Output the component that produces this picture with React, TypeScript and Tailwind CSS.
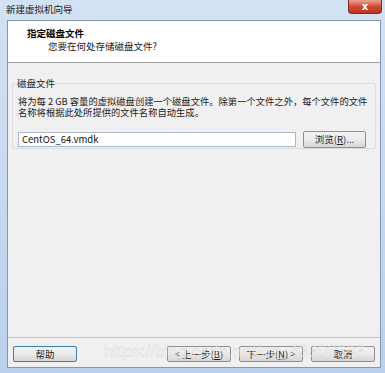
import React from 'react';

const btn =
  'h-[16px] flex items-center justify-center text-[9.5px] text-[#1e1e1e] rounded-[2px] border bg-gradient-to-b from-[#f2f2f2] via-[#ebebeb] to-[#d6d6d6] whitespace-nowrap';

const App: React.FC = () => {
  return (
    <div
      className="relative w-[385px] h-[373px] flex flex-col bg-gradient-to-b from-[#d3e2f3] to-[#b9d1ec] pl-[7px] pr-[4px] pb-[5px] overflow-hidden"
      style={{ fontFamily: '"Noto Sans CJK SC", "Liberation Sans", sans-serif' }}
    >
      {/* title bar */}
      <div className="h-[20px] flex items-center -ml-[1px] text-[9.5px] text-[#1b1b1b] leading-none">
        新建虚拟机向导
      </div>
      <div className="absolute top-0 right-[3px] w-[34px] h-[14px] rounded-b-[4px] border border-t-0 border-[#7a2b22] bg-gradient-to-b from-[#e9a493] via-[#cf4b32] to-[#c1361f] flex items-center justify-center">
        <span className="text-white text-[10px] font-bold leading-none" style={{ fontFamily: '"DejaVu Sans", sans-serif' }}>
          x
        </span>
      </div>

      {/* window body */}
      <div className="flex-1 flex flex-col border border-[#8497af] bg-[#f0f0f0]">
        <div className="h-[42px] bg-white border-b border-[#a0a0a0] pt-[6px]">
          <div className="pl-[19px] text-[9.5px] font-bold text-black leading-[13px]">指定磁盘文件</div>
          <div className="pl-[40px] text-[9.5px] text-[#222] leading-[13px]">您要在何处存储磁盘文件?</div>
        </div>

        <div className="flex-1 px-[4px] pt-[20px]">
          <div className="relative border border-[#dcdcdc] rounded-[3px] h-[66px] pt-[12px] px-[5px]">
            <div className="absolute -top-[7px] left-[3px] px-[1px] bg-[#f0f0f0] text-[9.5px] text-[#222] leading-[12px]">
              磁盘文件
            </div>
            <div className="text-[9.3px] text-[#222] leading-[11px] whitespace-nowrap">
              将为每 2 GB 容量的虚拟磁盘创建一个磁盘文件。除第一个文件之外，每个文件的文件
              <br />
              名称将根据此处所提供的文件名称自动生成。
            </div>
            <div className="flex items-center mt-[13px]">
              <div className="w-[278px] h-[15px] bg-white border border-[#a9b8cc] flex items-center pl-[3px] text-[9.5px] text-[#111]">
                CentOS_64.vmdk
              </div>
              <div className={`${btn} ml-[7px] w-[63px] h-[17px] border-[#8e8f8f]`}>浏览(<span className="underline">R</span>)...</div>
            </div>
          </div>
        </div>

        <div className="h-[30px] border-t border-[#c6c6c6] flex items-start pt-[8px] px-[5px]">
          <div className={`${btn} w-[64px] border-[#3c7fb1]`}>帮助</div>
          <div className="flex-1" />
          <div className={`${btn} w-[64px] border-[#8e8f8f]`}>&lt; 上一步(<span className="underline">B</span>)</div>
          <div className={`${btn} w-[64px] border-[#8e8f8f] ml-[8px]`}>下一步(<span className="underline">N</span>) &gt;</div>
          <div className={`${btn} w-[64px] border-[#8e8f8f] ml-[8px]`}>取消</div>
        </div>
      </div>

      {/* watermark */}
      <div
        aria-hidden="true"
        className="absolute left-[104px] top-[343px] text-[17px] leading-none text-white/60 pointer-events-none"
        style={{ fontFamily: '"Liberation Sans", sans-serif', WebkitTextStroke: '0.4px rgba(150,150,150,0.45)' }}
      >
        https://blog.csdn.net/qq_43308393
      </div>
    </div>
  );
};

export default App;
